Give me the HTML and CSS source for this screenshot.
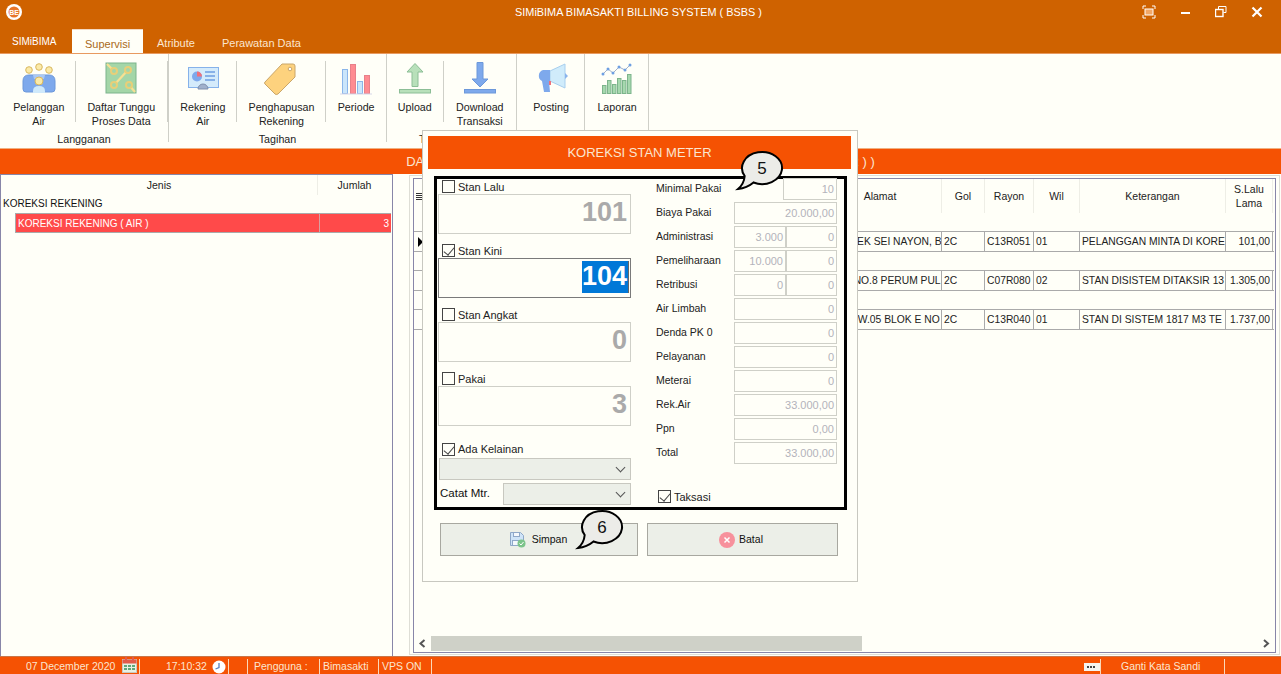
FILE: index.html
```html
<!DOCTYPE html>
<html lang="en">
<head>
  <meta charset="utf-8" />
  <title>SIMiBIMA BIMASAKTI BILLING SYSTEM ( BSBS )</title>
  <link rel="stylesheet" href="styles.css">
</head>
<body>
<div class="app">

  <!-- title bar and tabs -->
  <div class="topbar">
    <div class="titlebar">
      <svg class="logo" width="16" height="16" viewBox="0 0 16 16"><circle cx="8" cy="8" r="8" fill="#fff"/><circle cx="8" cy="8" r="5.5" fill="#e8762a"/><text x="8" y="11" text-anchor="middle" class="logo-text">BE</text></svg>
      <div class="title">SIMiBIMA BIMASAKTI BILLING SYSTEM ( BSBS )</div>
      <div class="winbtns">
        <svg width="14" height="14" viewBox="0 0 14 14"><path d="M1 4V1h3M10 1h3v3M13 10v3h-3M4 13H1v-3" fill="none" stroke="#fff"/><rect x="3" y="4" width="8" height="6" fill="#f2a868" stroke="#fff"/></svg>
        <svg width="10" height="14" viewBox="0 0 10 14"><rect x="0" y="7" width="9" height="2" fill="#fff"/></svg>
        <svg width="12" height="14" viewBox="0 0 12 14"><path d="M3.5 4V1.5h7.5v6H8.500" fill="none" stroke="#fff"/><rect x="0.500" y="4.500" width="7.500" height="7" fill="none" stroke="#fff" stroke-width="1.400"/></svg>
        <svg width="12" height="14" viewBox="0 0 12 14"><path d="M1.500 2.500l9 9M10.500 2.500l-9 9" stroke="#fff" stroke-width="2.200"/></svg>
      </div>
    </div>
    <div class="tabs">
      <div class="tab first">SIMiBIMA</div>
      <div class="tab active">Supervisi</div>
      <div class="tab">Atribute</div>
      <div class="tab">Perawatan Data</div>
    </div>
  </div>

  <!-- ribbon -->
  <div class="ribbon">
    <div class="group g1">
      <div class="items">
        <div class="item w75">
          <svg class="ico" width="36" height="36" viewBox="0 0 36 36"><circle cx="8" cy="9" r="3.300" fill="#fbeaa8" stroke="#d9b860"/><circle cx="18" cy="6" r="3.300" fill="#fbeaa8" stroke="#d9b860"/><circle cx="28" cy="9" r="3.300" fill="#fbeaa8" stroke="#d9b860"/><path d="M2 28V20q0-6 6-6h20q6 0 6 6v8q0 3-3 3H5q-3 0-3-3z" fill="#7ea9ec" stroke="#6c98da"/><path d="M12 14h12l-1 4H13z" fill="#a9c8f4"/><circle cx="18" cy="20" r="4" fill="#fbeaa8" stroke="#d9b860"/><path d="M12 32v-2q0-5 6-5t6 5v2z" fill="#cfe9fb"/></svg>
          <span>Pelanggan<br>Air</span>
        </div>
        <div class="item w93">
          <svg class="ico" width="36" height="36" viewBox="0 0 36 36"><rect x="3" y="2" width="30" height="30" fill="#a4d6a8" stroke="#7db48c"/><path d="M4 3l6 6M12 23l13-14M26 24l6 7" stroke="#f6e093" stroke-width="2.200" fill="none"/><circle cx="11" cy="10" r="3" fill="#a4d6a8" stroke="#e8cf78" stroke-width="2"/><circle cx="11" cy="24" r="3" fill="#a4d6a8" stroke="#e8cf78" stroke-width="2"/><circle cx="25" cy="9" r="3" fill="#a4d6a8" stroke="#e8cf78" stroke-width="2"/><circle cx="26" cy="24" r="3" fill="#a4d6a8" stroke="#e8cf78" stroke-width="2"/></svg>
          <span>Daftar Tunggu<br>Proses Data</span>
        </div>
      </div>
      <div class="group-label">Langganan</div>
    </div>
    <div class="group g2">
      <div class="items">
        <div class="item w68">
          <svg class="ico" width="36" height="36" viewBox="0 0 36 36"><rect x="3.500" y="6.500" width="30" height="20" fill="#d4ebfb" stroke="#86b2ea"/><circle cx="12" cy="15.500" r="5" fill="#7ea9ec"/><path d="M12 15.500v-5a5 5 0 0 1 5 5z" fill="#f0707a"/><path d="M20 11h10M20 15h10M20 19h10" stroke="#6e9fe2" stroke-width="1.500"/><path d="M13 28a5 5 0 0 1 10 0z" fill="#9fb0cc" stroke="#7f90ae"/></svg>
          <span>Rekening<br>Air</span>
        </div>
        <div class="item w90">
          <svg class="ico" width="36" height="36" viewBox="0 0 36 36"><path d="M2 21L19 3h11q2 0 2 2v11L15 33q-2 1-3 0L2 23q-1-1 0-2z" fill="#fdd27e" stroke="#c9a66a"/><circle cx="27" cy="8" r="1.800" fill="#fff" stroke="#c9a66a"/></svg>
          <span>Penghapusan<br>Rekening</span>
        </div>
        <div class="item w60 last">
          <svg class="ico" width="36" height="36" viewBox="0 0 36 36"><rect x="4.500" y="8.500" width="5" height="24" fill="#cbe6fb" stroke="#8bb6ea"/><rect x="12.500" y="3.500" width="5" height="29" fill="#ff8c92" stroke="#e8808a"/><rect x="19.500" y="20.500" width="5" height="12" fill="#cbe6fb" stroke="#8bb6ea"/><rect x="26.500" y="14.500" width="5" height="18" fill="#ff8c92" stroke="#e8808a"/><path d="M2 33h32" stroke="#d7d7e8"/></svg>
          <span>Periode</span>
        </div>
      </div>
      <div class="group-label">Tagihan</div>
    </div>
    <div class="group g3">
      <div class="items">
        <div class="item w57">
          <svg class="ico" width="36" height="36" viewBox="0 0 36 36"><path d="M18 2.500l8 8.500h-5v14.500h-6V11h-5z" fill="#b8e0ba" stroke="#8cbe96"/><rect x="2.500" y="28.500" width="31" height="3.500" fill="#b8e0ba" stroke="#8cbe96"/></svg>
          <span>Upload</span>
        </div>
        <div class="item w73 last">
          <svg class="ico" width="36" height="36" viewBox="0 0 36 36"><path d="M15 1.500h6V18h5l-8 8-8-8h5z" fill="#7ea9ec" stroke="#6c98da"/><rect x="2.500" y="28.500" width="31" height="3.500" fill="#7ea9ec" stroke="#6c98da"/></svg>
          <span>Download<br>Transaksi</span>
        </div>
      </div>
      <div class="group-label">Transfer Data</div>
    </div>
    <div class="group g4">
      <div class="items">
        <div class="item w68 last">
          <svg class="ico" width="36" height="36" viewBox="0 0 36 36"><path d="M17 10l15-7v24l-15-7z" fill="#d0ecfb" stroke="#a8cfee"/><path d="M32 12l3 3-3 3z" fill="#8ab4ec"/><path d="M10 9h7v11h-1l1 11h-6l-2-11a6 6 0 0 1 1-11z" fill="#7ea9ec"/><rect x="16" y="20" width="2" height="4" fill="#f0707a"/></svg>
          <span>Posting</span>
        </div>
      </div>
      <div class="group-label">&nbsp;</div>
    </div>
    <div class="group g5">
      <div class="items">
        <div class="item w64 last">
          <svg class="ico" width="36" height="36" viewBox="0 0 36 36"><g fill="#a6d8ae" stroke="#7db48c"><rect x="3.500" y="24.500" width="3.500" height="8"/><rect x="8.500" y="19.500" width="3.500" height="13"/><rect x="13.500" y="23.500" width="3.500" height="9"/><rect x="18.500" y="17.500" width="3.500" height="15"/><rect x="23.500" y="19.500" width="3.500" height="13"/><rect x="28.500" y="13.500" width="3.500" height="19"/></g><path d="M4 13l5-5 5 4 6-6 6 3 5-5" fill="none" stroke="#9fb0cc"/><g fill="#6e9fe2"><circle cx="4" cy="13" r="1.500"/><circle cx="9" cy="8" r="1.500"/><circle cx="14" cy="12" r="1.500"/><circle cx="20" cy="6" r="1.500"/><circle cx="26" cy="9" r="1.500"/><circle cx="31" cy="4" r="1.500"/></g></svg>
          <span>Laporan</span>
        </div>
      </div>
      <div class="group-label">&nbsp;</div>
    </div>
  </div>

  <div class="band">DAFTAR PELANGGAN – KOREKSI REKENING ( KOREKSI REKENING ( AIR ) )</div>

  <!-- two grids under the dialog -->
  <div class="main">
    <div class="left-panel">
      <div class="left-head">
        <div class="lh-jenis">Jenis</div>
        <div class="lh-jumlah">Jumlah</div>
      </div>
      <div class="left-group">KOREKSI REKENING</div>
      <div class="left-row">
        <div class="lr-name">KOREKSI REKENING ( AIR )</div>
        <div class="lr-num">3</div>
      </div>
    </div>

    <div class="right-panel">
      <div class="frame">
        <div class="row head">
          <div class="gutter"><span class="listicon"></span></div>
          <div class="c">Alamat</div>
          <div class="c">Gol</div>
          <div class="c">Rayon</div>
          <div class="c">Wil</div>
          <div class="c">Keterangan</div>
          <div class="c">S.Lalu<br>Lama</div>
        </div>
        <div class="blank first-blank"></div>
        <div class="row data">
          <div class="gutter"><span class="arrow"></span></div>
          <div class="d">KOMPLEK SEI NAYON, B</div>
          <div class="d">2C</div>
          <div class="d">C13R051</div>
          <div class="d">01</div>
          <div class="d">PELANGGAN MINTA DI KORE</div>
          <div class="d num">101,00</div>
        </div>
        <div class="blank"></div>
        <div class="row data">
          <div class="gutter"></div>
          <div class="d">JL. AB NO.8 PERUM PUL</div>
          <div class="d">2C</div>
          <div class="d">C07R080</div>
          <div class="d">02</div>
          <div class="d">STAN DISISTEM DITAKSIR 13</div>
          <div class="d num">1.305,00</div>
        </div>
        <div class="blank"></div>
        <div class="row data">
          <div class="gutter"></div>
          <div class="d">RT.01 RW.05 BLOK E NO</div>
          <div class="d">2C</div>
          <div class="d">C13R040</div>
          <div class="d">01</div>
          <div class="d">STAN DI SISTEM 1817 M3 TE</div>
          <div class="d num">1.737,00</div>
        </div>
        <div class="hscroll">
          <svg class="chev" width="17" height="15" viewBox="0 0 17 15"><path d="M10.500 4l-4 3.500 4 3.500" fill="none" stroke="#555" stroke-width="2"/></svg>
          <div class="thumb"></div>
          <div class="track"></div>
          <svg class="chev" width="17" height="15" viewBox="0 0 17 15"><path d="M6 4l4 3.500-4 3.500" fill="none" stroke="#555" stroke-width="2"/></svg>
        </div>
      </div>
    </div>
  </div>

  <!-- status bar -->
  <div class="status">
    <div class="st st-date">07 December 2020
      <svg class="st-ico" width="15" height="16" viewBox="0 0 15 16"><rect x="0.500" y="2.500" width="14" height="13" fill="#e8f0e4" stroke="#c9c9c0"/><rect x="0.500" y="2.500" width="14" height="4" fill="#e25a4a"/><rect x="3" y="0" width="2" height="4" fill="#e25a4a"/><rect x="10" y="0" width="2" height="4" fill="#e25a4a"/><g fill="#5fa77a"><rect x="2" y="8" width="3" height="2"/><rect x="6" y="8" width="3" height="2"/><rect x="10" y="8" width="3" height="2"/><rect x="2" y="11" width="3" height="2"/><rect x="6" y="11" width="3" height="2"/><rect x="10" y="11" width="3" height="2"/></g></svg>
    </div>
    <div class="st st-time">17:10:32
      <svg class="st-ico" width="14" height="14" viewBox="0 0 14 14"><circle cx="7" cy="7" r="6.500" fill="#fff"/><path d="M7 3v4.500L3.500 9" fill="none" stroke="#5580c0" stroke-width="1.300"/></svg>
    </div>
    <div class="st st-empty"></div>
    <div class="st st-user">Pengguna :</div>
    <div class="st st-name">Bimasakti</div>
    <div class="st st-vps">VPS ON</div>
    <div class="st-spacer">
      <svg width="16" height="8" viewBox="0 0 16 8"><rect width="16" height="8" fill="#f4f4f0"/><path d="M3 3h2v2H3zM6 3h2v2H6zM9 3h2v2H9z" fill="#444"/></svg>
    </div>
    <div class="st st-pass">Ganti Kata Sandi</div>
  </div>

  <!-- dialog -->
  <div class="dialog">
    <div class="dialog-head">KOREKSI STAN METER</div>
    <div class="box">
      <div class="col-left">
        <div class="stan">
          <label class="chk"><span class="cb"></span>Stan Lalu</label>
          <div class="bigfield">101</div>
        </div>
        <div class="stan">
          <label class="chk"><span class="cb on"></span>Stan Kini</label>
          <div class="bigfield focus"><span class="sel">104</span></div>
        </div>
        <div class="stan">
          <label class="chk"><span class="cb"></span>Stan Angkat</label>
          <div class="bigfield">0</div>
        </div>
        <div class="stan">
          <label class="chk"><span class="cb"></span>Pakai</label>
          <div class="bigfield">3</div>
        </div>
        <label class="chk kelainan"><span class="cb on"></span>Ada Kelainan</label>
        <div class="combo wide"></div>
        <div class="catat">
          <span class="catat-label">Catat Mtr.</span>
          <div class="combo"></div>
        </div>
      </div>
      <div class="col-right">
        <div class="frow"><span>Minimal Pakai</span><div class="f short">10</div></div>
        <div class="frow"><span>Biaya Pakai</span><div class="f full">20.000,00</div></div>
        <div class="frow"><span>Administrasi</span><div class="f">3.000</div><div class="f">0</div></div>
        <div class="frow"><span>Pemeliharaan</span><div class="f">10.000</div><div class="f">0</div></div>
        <div class="frow"><span>Retribusi</span><div class="f">0</div><div class="f">0</div></div>
        <div class="frow"><span>Air Limbah</span><div class="f full2">0</div></div>
        <div class="frow"><span>Denda PK 0</span><div class="f full2">0</div></div>
        <div class="frow"><span>Pelayanan</span><div class="f full2">0</div></div>
        <div class="frow"><span>Meterai</span><div class="f full2">0</div></div>
        <div class="frow"><span>Rek.Air</span><div class="f full2">33.000,00</div></div>
        <div class="frow"><span>Ppn</span><div class="f full2">0,00</div></div>
        <div class="frow"><span>Total</span><div class="f full2">33.000,00</div></div>
        <label class="chk taksasi"><span class="cb on"></span>Taksasi</label>
      </div>
    </div>
    <div class="buttons">
      <div class="btn simpan">
        <svg width="17" height="17" viewBox="0 0 17 17"><path d="M1.500 1.500h10l3 3v10h-13z" fill="#cfe4f8" stroke="#8fa8c8"/><rect x="4.500" y="1.500" width="6" height="4" fill="#f4f8fc" stroke="#8fa8c8"/><rect x="3.500" y="9.500" width="8" height="5" fill="#f4f8fc" stroke="#8fa8c8"/><circle cx="12.500" cy="12.500" r="4" fill="#7cc48a"/><path d="M10.500 12.500l1.500 1.500 2.500-3" fill="none" stroke="#fff"/></svg>
        <span>Simpan</span>
      </div>
      <div class="btn batal">
        <svg width="16" height="16" viewBox="0 0 16 16"><circle cx="8" cy="8" r="8" fill="#f7919c"/><path d="M5.500 5.500l5 5M10.500 5.500l-5 5" stroke="#fff" stroke-width="1.500"/></svg>
        <span>Batal</span>
      </div>
    </div>
  </div>

  <!-- numbered callouts -->
  <svg class="bubble b5" width="52" height="44" viewBox="0 0 52 44"><path d="M9.700 27Q9 35 3 40Q12 39 18.500 33.500A20 16 0 1 0 9.700 27Z" fill="#ecece8" stroke="#000" stroke-width="2"/><text x="27" y="25" text-anchor="middle" class="bubble-text">5</text></svg>
  <svg class="bubble b6" width="52" height="44" viewBox="0 0 52 44"><path d="M9.700 27Q9 35 3 40Q12 39 18.500 33.500A20 16 0 1 0 9.700 27Z" fill="#ecece8" stroke="#000" stroke-width="2"/><text x="27" y="25" text-anchor="middle" class="bubble-text">6</text></svg>
</div>
</body>
</html>
```

FILE: styles.css
```css
*{
    box-sizing:border-box;
}
html,body{
    margin:0;
    padding:0;
    height:100%;
    overflow:hidden;
}
body{
    font-family:"Liberation Sans",Arial,sans-serif;
    font-size:11px;
    color:#222;
    background:#fffff8;
}
.app{
    position:relative;
    width:1281px;
    height:674px;
    display:flex;
    flex-direction:column;
    overflow:hidden;
}

/* title bar + tabs */
.topbar{
    height:54px;
    background:#cf6200;
    border-bottom:1px solid #e89a60;
    flex:none;
}
.titlebar{
    height:29px;
    display:flex;
    align-items:center;
    padding:0 18px 5px 6px;
}
.logo-text{
    font-size:7px;
    font-weight:bold;
    fill:#fff;
}
.title{
    flex:1;
    text-align:center;
    color:#fff;
    font-size:10.9px;
    padding-left:113px;
}
.winbtns{
    display:flex;
    align-items:center;
    gap:24px;
}
.winbtns svg:first-child{
    margin-right:1px;
}
.tabs{
    display:flex;
    height:24px;
    align-items:flex-end;
}
.tab{
    color:#fbe6d0;
    height:24px;
    padding:8px 13px 0 14px;
}
.tab.first{
    width:72px;
    padding:7px 0 0 12px;
    color:#fff;
    font-size:10px;
}
.tab.active{
    width:71px;
    background:#fffff8;
    color:#a96a22;
    padding:8px 0 0 13px;
    margin-right:0;
    border-top:1px solid #f4d8c0;
}

/* ribbon */
.ribbon{
    height:95px;
    flex:none;
    display:flex;
    background:#fffff8;
    border-bottom:1px solid #f0b080;
    font-size:10.7px;
}
.group{
    display:flex;
    flex-direction:column;
    height:88px;
    border-right:1px solid #cfd0c8;
}
.g1{width:169px;}
.g2{width:218px;}
.g3{width:130px;}
.g4{width:68px;}
.g5{width:64px;}
.items{
    display:flex;
    flex:none;
    height:78px;
    padding-top:7px;
}
.item{
    height:61px;
    border-right:1px solid #cfd0c8;
    display:flex;
    flex-direction:column;
    align-items:center;
    text-align:center;
    line-height:14px;
    white-space:nowrap;
}
.item.last{
    border-right:0;
}
.ico{
    flex:none;
    margin-bottom:3px;
}
.w57{width:57px;}
.w60{width:60px;}
.w64{width:64px;padding-left:1px;}
.w68{width:68px;padding-left:1px;}
.w73{width:73px;}
.w75{width:76px;padding-left:3px;}
.w90{width:90px;padding-left:1px;}
.w93{width:93px;}
.group-label{
    flex:none;
    text-align:center;
    line-height:14px;
    white-space:nowrap;
}

/* orange heading band */
.band{
    height:25px;
    flex:none;
    background:#f55203;
    color:#fbe6d0;
    font-size:13px;
    line-height:26px;
    text-align:center;
    white-space:nowrap;
}

/* main area */
.main{
    flex:1;
    display:flex;
    min-height:0;
}
.left-panel{
    width:393px;
    border:1px solid #8886a8;
    border-bottom:0;
    padding-right:1px;
}
.left-head{
    display:flex;
    height:20px;
    line-height:20px;
    text-align:center;
    font-size:10.5px;
}
.lh-jenis{
    width:317px;
    border-right:1px solid #eeeee6;
}
.lh-jumlah{
    flex:1;
}
.left-group{
    padding-left:2px;
    height:18px;
    line-height:18px;
    color:#111;
    font-size:10px;
}
.left-row{
    display:flex;
    margin-left:14px;
    height:20px;
    line-height:19px;
    background:#ff4a4a;
    color:#fff;
    border:1px solid #aaa;
    border-right:0;
    font-size:10px;
}
.lr-name{
    width:304px;
    padding-left:2px;
    border-right:1px solid #d8a0a0;
}
.lr-num{
    flex:1;
    text-align:right;
    padding-right:2px;
}
.right-panel{
    margin:1px 0 0 16px;
    width:871px;
    height:480px;
    border:1px solid #deded6;
    padding:2px 3px 2px 3px;
}
.frame{
    height:475px;
    border:1px solid #8886a8;
    display:flex;
    flex-direction:column;
    position:relative;
}

/* data grid */
.row{
    display:grid;
    grid-template-columns:405px 123px 43px 49px 46px 146px 47px;
    flex:none;
}
.row.head{
    height:36px;
    text-align:center;
    line-height:14px;
    font-size:10.5px;
    padding-bottom:2px;
}
.c{
    display:flex;
    align-items:center;
    justify-content:center;
    border-right:1px solid #eeeee6;
}
.gutter{
    position:relative;
}
.listicon{
    position:absolute;
    left:2px;
    top:14px;
    width:6px;
    height:7px;
    background:repeating-linear-gradient(#333 0,#333 1px,transparent 1px,transparent 2px);
}
.arrow{
    position:absolute;
    left:4px;
    top:5px;
    border-left:5px solid #000;
    border-top:5px solid transparent;
    border-bottom:5px solid transparent;
}
.row.data{
    height:21px;
    border-top:1px solid #aaa;
    border-bottom:1px solid #aaa;
    width:860px;
    line-height:19px;
    font-size:10.3px;
}
.d{
    padding-left:2px;
    border-right:1px solid #aaa;
    white-space:nowrap;
    overflow:hidden;
    color:#222;
}
.d.num{
    text-align:right;
    padding:0 2px 0 0;
}
.blank{
    height:18px;
    flex:none;
}
.first-blank{
    height:16px;
}
.hscroll{
    margin-top:auto;
    margin-bottom:1px;
    height:15px;
    display:flex;
    flex:none;
}
.chev{
    flex:none;
}
.thumb{
    width:431px;
    background:#cfd1c8;
}
.track{
    flex:1;
}

/* status bar */
.status{
    height:18px;
    flex:none;
    display:flex;
    background:#f55203;
    border-top:1px solid #c8764a;
    color:#fbe6d0;
    white-space:nowrap;
    font-size:10.5px;
}
.st{
    height:15px;
    margin-top:2px;
    line-height:15px;
    border-right:1px solid #fbd8b8;
    display:flex;
    align-items:center;
}
.st-ico{
    margin:0 0 3px 7px;
    flex:none;
}
.st-date{
    width:140px;
    padding-left:26px;
}
.st-time{
    width:89px;
    padding-left:26px;
}
.st-time .st-ico{
    margin:0 0 0 5px;
}
.st-empty{
    width:19px;
}
.st-user{
    width:72px;
    padding-left:6px;
}
.st-name{
    width:59px;
    padding-left:3px;
}
.st-vps{
    width:53px;
    padding-left:3px;
}
.st-spacer{
    width:669px;
    display:flex;
    align-items:center;
    justify-content:flex-end;
    border-right:1px solid #fbd8b8;
    height:15px;
    margin-top:2px;
}
.st-pass{
    width:124px;
    padding-left:20px;
}

/* dialog */
.dialog{
    position:absolute;
    left:422px;
    top:130px;
    width:436px;
    height:452px;
    background:#fffff8;
    border:1px solid #c8c8c0;
    padding:5px;
}
.dialog-head{
    width:423px;
    height:33px;
    background:#f55203;
    color:#fbe6d0;
    font-size:13px;
    line-height:33px;
    text-align:center;
}
.box{
    margin:7px 0 0 6px;
    width:413px;
    height:334px;
    border:3px solid #000;
    display:flex;
}
.col-left{
    width:193px;
    margin-left:1px;
    flex:none;
}
.stan{
    height:64px;
}
.chk{
    display:flex;
    align-items:center;
    gap:3px;
    height:15px;
    padding-left:4px;
    white-space:nowrap;
}
.cb{
    width:13px;
    height:13px;
    border:1px solid #444;
    background:#fffff8;
    position:relative;
    flex:none;
}
.cb.on::after{
    content:"";
    position:absolute;
    left:3px;
    top:0;
    width:5px;
    height:9px;
    border:solid #444;
    border-width:0 1.500px 1.500px 0;
    transform:rotate(40deg);
}
.bigfield{
    height:40px;
    border:1px solid #cfd0c8;
    text-align:right;
    font-size:27px;
    font-weight:bold;
    line-height:35px;
    color:#aaaaaa;
    padding-right:3px;
}
.bigfield.focus{
    border-color:#7a7a7a;
    color:#fff;
    line-height:30px;
    padding:2px 1px 0 0;
}
.sel{
    display:inline-block;
    height:32px;
    background:#0078d7;
    padding:0 1px 0 0;
    border-right:1px solid #666;
}
.kelainan{
    margin-top:6px;
    height:17px;
    padding-top:2px;
    align-items:flex-start;
}
.combo{
    height:22px;
    background:#ecefe8;
    border:1px solid #c8c8c0;
    position:relative;
    flex:1;
}
.combo::after{
    content:"";
    position:absolute;
    right:6px;
    top:5px;
    width:6px;
    height:6px;
    border:solid #555;
    border-width:0 1px 1px 0;
    transform:rotate(45deg);
}
.combo.wide{
    margin-left:1px;
}
.catat{
    display:flex;
    align-items:center;
    margin-top:3px;
}
.catat-label{
    width:65px;
    padding:0 0 2px 2px;
    font-size:11.500px;
    color:#111;
}
.col-right{
    margin-left:25px;
    margin-top:-1px;
    width:181px;
    flex:none;
    font-size:10.5px;
}
.frow{
    display:grid;
    grid-template-columns:78px 52px 51px;
    height:22px;
    margin-bottom:2px;
    align-items:center;
}
.frow > span{
    padding-bottom:3px;
}
.f{
    height:22px;
    border:1px solid #cfd0c8;
    color:#b3b3bb;
    text-align:right;
    line-height:21px;
    padding-right:2px;
    font-size:11px;
}
.f.short{
    grid-column:3;
    width:54px;
    margin-left:-3px;
}
.f.full{
    grid-column:2 / 4;
}
.f.full2{
    grid-column:2 / 4;
    width:103px;
}
.taksasi{
    margin:25px 0 0 2px;
    padding-left:0;
    font-size:11px;
}
.buttons{
    display:flex;
    gap:9px;
    margin:13px 0 0 12px;
}
.btn{
    height:33px;
    background:#ecefe8;
    border:1px solid #a8a8a0;
    display:flex;
    align-items:center;
    justify-content:center;
    gap:6px;
    color:#111;
    font-size:10.5px;
}
.btn span{
    padding-bottom:1px;
}
.simpan{
    width:198px;
    padding-right:2px;
}
.batal{
    width:191px;
    gap:4px;
    padding-right:3px;
}

/* callouts */
.bubble{
    position:absolute;
}
.b5{
    left:735px;
    top:149px;
}
.b6{
    left:575px;
    top:508px;
}
.bubble-text{
    font-family:"Liberation Sans",Arial,sans-serif;
    font-size:17px;
    fill:#111;
}
```
